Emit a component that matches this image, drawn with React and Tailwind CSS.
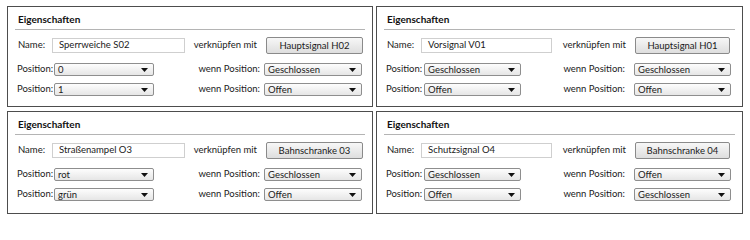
import React from 'react';

const panels = [
  {
    name: 'Sperrweiche S02',
    link: 'Hauptsignal H02',
    rows: [
      ['0', 'Geschlossen'],
      ['1', 'Offen'],
    ],
  },
  {
    name: 'Vorsignal V01',
    link: 'Hauptsignal H01',
    rows: [
      ['Geschlossen', 'Geschlossen'],
      ['Offen', 'Offen'],
    ],
  },
  {
    name: 'Straßenampel O3',
    link: 'Bahnschranke 03',
    rows: [
      ['rot', 'Geschlossen'],
      ['grün', 'Offen'],
    ],
  },
  {
    name: 'Schutzsignal O4',
    link: 'Bahnschranke 04',
    rows: [
      ['Geschlossen', 'Offen'],
      ['Offen', 'Geschlossen'],
    ],
  },
];

// fake combo box with the little black arrow
const Select = ({ value, width }) => (
  <div
    className={`flex h-[13px] shrink-0 items-center justify-between rounded-[2px] border border-[#8e8e8e] bg-gradient-to-b from-[#fdfdfd] to-[#e6e6e6] pl-[3px] pr-[5px] ${width}`}
  >
    <span className="leading-none">{value}</span>
    <svg width="7" height="4" viewBox="0 0 7 4">
      <path d="M0 0 H7 L3.5 4 Z" fill="#111" />
    </svg>
  </div>
);

const Panel = ({ data, wide }) => (
  <div className="flex flex-col border border-[#4d4d4d] bg-white">
    <div className="pl-[10px] pt-[6px] text-[10px] font-bold leading-[12px] text-[#111]">Eigenschaften</div>
    <div className="mx-[7px] mt-[4px] h-px bg-[#b4b4b4]" />

    {/* Name row */}
    <div className={`mt-[6px] flex h-[19px] items-center whitespace-nowrap pl-[10px] ${wide ? 'pr-[9px]' : 'pr-[12px]'}`}>
      <span className="w-[34px] shrink-0">Name:</span>
      <div className={`flex h-[15px] shrink-0 items-center border border-[#cfcfcf] bg-white pl-[6px] ${wide ? 'w-[133px]' : 'w-[131px]'}`}>
        {data.name}
      </div>
      <span className="ml-auto">verknüpfen mit</span>
      <button
        className={`ml-[9px] h-[17px] shrink-0 rounded-[2px] border border-[#8a8a8a] bg-gradient-to-b from-[#f7f7f7] to-[#dedede] text-center leading-none ${wide ? 'w-[97px]' : 'w-[95px]'}`}
      >
        {data.link}
      </button>
    </div>

    {/* Position rows */}
    <div className={`mt-[8px] flex flex-col gap-[7px] whitespace-nowrap pl-[9px] ${wide ? 'pr-[10px]' : 'pr-[11px]'}`}>
      {data.rows.map(([left, right], i) => (
        <div key={i} className="flex h-[13px] items-center">
          <span className={`shrink-0 ${wide ? 'w-[37px]' : 'w-[38px]'}`}>Position:</span>
          <Select value={left} width={wide ? 'w-[100px]' : 'w-[97px]'} />
          <span className="ml-auto">wenn Position:</span>
          <div className={wide ? 'ml-[4px]' : 'ml-[9px]'}>
            <Select value={right} width={wide ? 'w-[98px]' : 'w-[97px]'} />
          </div>
        </div>
      ))}
    </div>
  </div>
);

export default function App() {
  return (
    <div
      className="h-[216px] w-[750px] bg-white pl-[7px] pt-[6px] text-[9.5px] text-[#1a1a1a]"
      style={{ fontFamily: 'Lato, "Liberation Sans", sans-serif' }}
    >
      <div className="grid grid-cols-[366px_367px] grid-rows-[101px_103px] gap-x-[3px] gap-y-[4px]">
        {panels.map((p, i) => (
          <Panel key={i} data={p} wide={i % 2 === 0} />
        ))}
      </div>
    </div>
  );
}
